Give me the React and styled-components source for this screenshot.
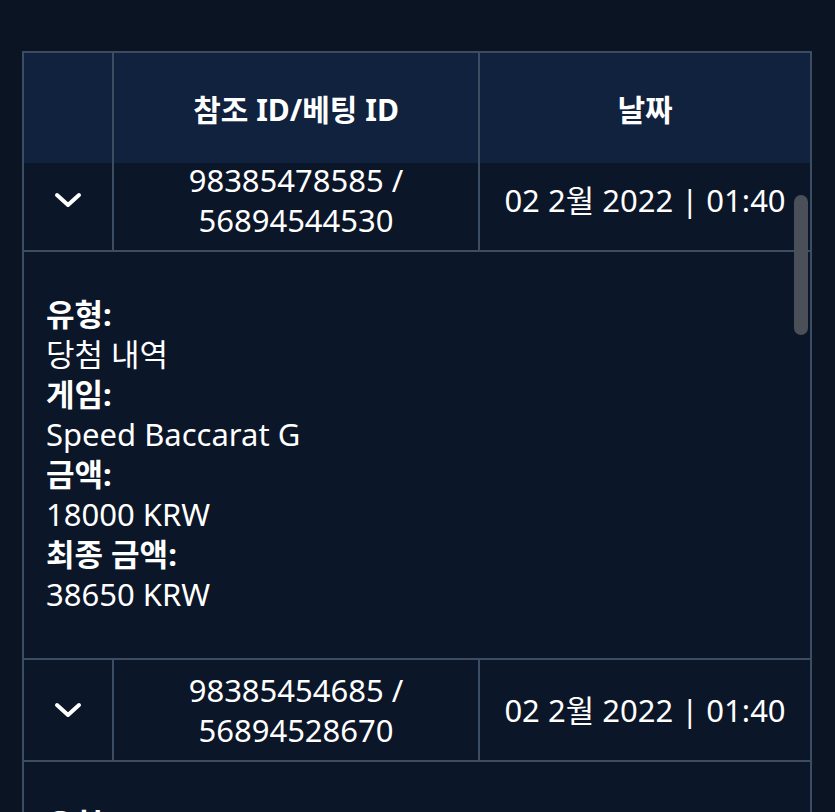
import React, { useEffect, useRef } from "react";
import styled, { createGlobalStyle } from "styled-components";

const rows = [
  {
    ref: "98385478585",
    bet: "56894544530",
    date: "02 2월 2022 | 01:40",
    type: "당첨 내역",
    game: "Speed Baccarat G",
    amount: "18000 KRW",
    total: "38650 KRW",
  },
  {
    ref: "98385454685",
    bet: "56894528670",
    date: "02 2월 2022 | 01:40",
    type: "당첨 내역",
    game: "Speed Baccarat G",
    amount: "18000 KRW",
    total: "38650 KRW",
  },
];

const GlobalStyle = createGlobalStyle`
  html, body {
    margin: 0;
    padding: 0;
    background: #0a1423;
    overflow: hidden;
  }
  body {
    font-family: "Noto Sans", "Noto Sans CJK KR", sans-serif;
    color: #ffffff;
  }
`;

const Page = styled.div`
  padding: 51px 23px 0 22px;
  height: 812px;
  box-sizing: border-box;
`;

const Table = styled.div`
  border: 2px solid #3b4c63;
  border-bottom: none;
  background: #0b1628;
  position: relative;
`;

const Grid = styled.div`
  display: grid;
  grid-template-columns: 88px 366px 1fr;
  & > * + * {
    border-left: 2px solid #3b4c63;
  }
`;

const HeadRow = styled(Grid)`
  height: 110px;
  background: #10223e;
`;

const HeadCell = styled.div`
  display: flex;
  align-items: center;
  justify-content: center;
  font-size: 30px;
  font-weight: 700;
`;

const Body = styled.div`
  height: 700px;
  overflow-y: auto;
  scrollbar-width: none;
  &::-webkit-scrollbar {
    display: none;
  }
`;

const Row = styled(Grid)`
  border-top: 2px solid #3b4c63;
`;

const Cell = styled.div`
  display: flex;
  align-items: center;
  justify-content: center;
  text-align: center;
  font-size: 31px;
  line-height: 40px;
  padding: 10px 4px;
`;

const Toggle = styled.button`
  background: none;
  border: none;
  padding: 0;
  display: flex;
  cursor: pointer;
`;

const Details = styled.div`
  border-top: 2px solid #3b4c63;
  padding: 42px 22px 44px;
  font-size: 31px;
  line-height: 40px;
`;

const Label = styled.div`
  font-weight: 700;
`;

const Value = styled.div`
  font-weight: 400;
`;

const Thumb = styled.div`
  position: absolute;
  right: 2px;
  top: 142px;
  width: 14px;
  height: 140px;
  border-radius: 7px;
  background: #4b4f57;
`;

function Chevron() {
  return (
    <svg width="28" height="16" viewBox="0 0 28 16">
      <polyline
        points="3,3 14,13 25,3"
        fill="none"
        stroke="#ffffff"
        strokeWidth="4"
        strokeLinecap="round"
        strokeLinejoin="round"
      />
    </svg>
  );
}

export default function App() {
  const bodyRef = useRef(null);

  useEffect(() => {
    if (bodyRef.current) bodyRef.current.scrollTop = 15;
  }, []);

  return (
    <Page>
      <GlobalStyle />
      <Table>
        <HeadRow>
          <HeadCell />
          <HeadCell>참조 ID/베팅 ID</HeadCell>
          <HeadCell>날짜</HeadCell>
        </HeadRow>
        <Body ref={bodyRef}>
          {rows.map((r) => (
            <React.Fragment key={r.ref}>
              <Row>
                <Cell>
                  <Toggle>
                    <Chevron />
                  </Toggle>
                </Cell>
                <Cell>
                  {r.ref} /
                  <br />
                  {r.bet}
                </Cell>
                <Cell>{r.date}</Cell>
              </Row>
              <Details>
                <Label>유형:</Label>
                <Value>{r.type}</Value>
                <Label>게임:</Label>
                <Value>{r.game}</Value>
                <Label>금액:</Label>
                <Value>{r.amount}</Value>
                <Label>최종 금액:</Label>
                <Value>{r.total}</Value>
              </Details>
            </React.Fragment>
          ))}
        </Body>
        <Thumb />
      </Table>
    </Page>
  );
}
